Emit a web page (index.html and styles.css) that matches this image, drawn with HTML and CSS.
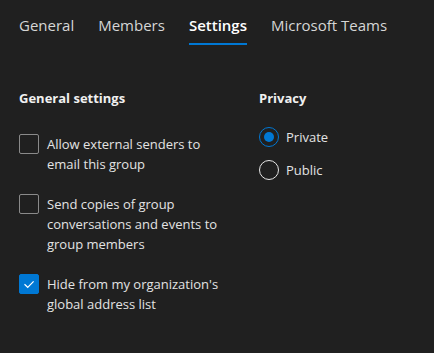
FILE: index.html
```html
<!DOCTYPE html>
<html lang="en">

<head>
    <meta charset="UTF-8" />
    <meta name="viewport" content="width=device-width, initial-scale=1.0" />
    <title>Group settings</title>
    <link rel="stylesheet" href="styles.css">
</head>

<body>
    <nav class="tabs">
        <span class="tab">General</span>
        <span class="tab">Members</span>
        <span class="tab active">Settings</span>
        <span class="tab">Microsoft Teams</span>
    </nav>

    <div class="content">
        <section class="col-left">
            <h2>General settings</h2>
            <div class="checks">
                <label class="check">
                    <span class="box"></span>
                    <span class="label-text">Allow external senders to email this group</span>
                </label>
                <label class="check">
                    <span class="box"></span>
                    <span class="label-text">Send copies of group conversations and events to group members</span>
                </label>
                <label class="check">
                    <span class="box checked">
                        <svg viewBox="0 0 20 20" width="20" height="20">
                            <path d="M5.5 10.3 L8.7 13.3 L14.6 7.3" fill="none" stroke="#fff" stroke-width="1.2" />
                        </svg>
                    </span>
                    <span class="label-text">Hide from my organization's global address list</span>
                </label>
            </div>
        </section>

        <section class="col-right">
            <h2>Privacy</h2>
            <div class="radios">
                <label class="radio">
                    <span class="circle selected"></span>
                    <span>Private</span>
                </label>
                <label class="radio">
                    <span class="circle"></span>
                    <span>Public</span>
                </label>
            </div>
        </section>
    </div>
</body>

</html>
```

FILE: styles.css
```css
/* Reset */
* {
    margin: 0;
    padding: 0;
    box-sizing: border-box;
}

body {
    font-family: "Open Sans", "Noto Sans", sans-serif;
    background: #202020;
    color: #e3e3e3;
    padding: 0 19px;
    font-size: 13px;
    line-height: 20px;
}

/* Tabs */
.tabs {
    display: flex;
    gap: 24px;
    padding-top: 14px;
}

.tab {
    font-size: 15px;
    line-height: 22px;
    color: #d6d6d6;
    padding-bottom: 7px;
    border-bottom: 2px solid transparent;
}

.tab.active {
    color: #fff;
    font-weight: 600;
    border-bottom-color: #0078d4;
}

/* Columns */
.content {
    display: grid;
    grid-template-columns: 240px 1fr;
    padding-top: 43px;
}

h2 {
    font-size: 13px;
    font-weight: 700;
    color: #f0f0f0;
    line-height: 20px;
}

.checks {
    display: flex;
    flex-direction: column;
    gap: 20px;
    margin-top: 26px;
    width: 210px;
}

.check {
    display: flex;
    gap: 8px;
}

.box {
    flex: none;
    width: 20px;
    height: 20px;
    border: 1px solid #8a8a8a;
    border-radius: 2px;
}

.box.checked {
    background: #0078d4;
    border-color: #0078d4;
}

.box svg {
    display: block;
    margin: -1px;
}

.radios {
    display: flex;
    flex-direction: column;
    gap: 13px;
    margin-top: 19px;
}

.radio {
    display: flex;
    align-items: center;
    gap: 7px;
}

.circle {
    width: 20px;
    height: 20px;
    border: 1px solid #e6e6e6;
    border-radius: 50%;
}

.circle.selected {
    border-color: #0078d4;
    position: relative;
}

.circle.selected::after {
    content: "";
    position: absolute;
    left: 4px;
    top: 4px;
    width: 10px;
    height: 10px;
    border-radius: 50%;
    background: #0078d4;
}
```
